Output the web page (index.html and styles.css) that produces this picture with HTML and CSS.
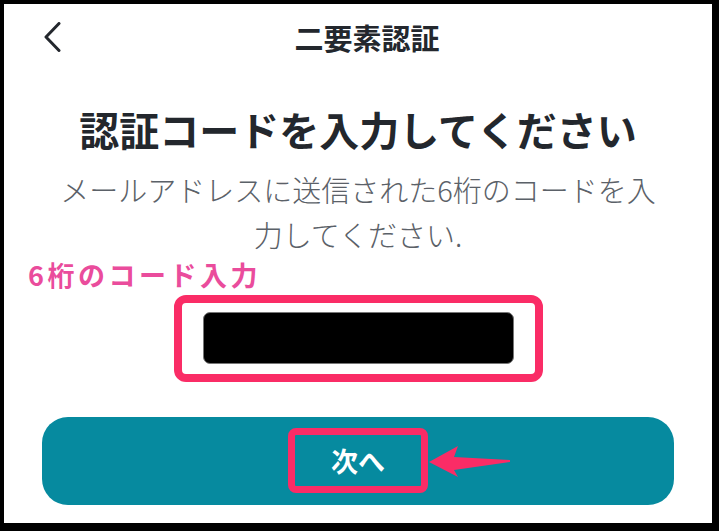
FILE: index.html
```html
<!DOCTYPE html>
<html lang="ja">
<head>
<meta charset="utf-8">
<link rel="stylesheet" href="styles.css">
</head>
<body>
<div class="screen">
  <header class="header">
    <svg class="back" width="20" height="30" viewBox="0 0 20 30"><polyline points="16,1.5 3,15 16,28.5" fill="none" stroke="#23272d" stroke-width="3" stroke-linecap="round" stroke-linejoin="round"/></svg>
    <h1 class="title">二要素認証</h1>
  </header>
  <h2 class="heading">認証コードを入力してください</h2>
  <p class="sub">メールアドレスに送信された6桁のコードを入力してください.</p>
  <div class="label">6桁のコード入力</div>
  <div class="frame"><div class="code"></div></div>
  <div class="btn">
    <span class="btn-frame">次へ</span>
    <svg class="arrow" width="84" height="36" viewBox="0 0 84 36"><polygon points="0,17 29,1 25,12 81,15 81,17 25,25 29,32" fill="#fa2c66"/></svg>
  </div>
</div>
</body>
</html>
```
FILE: styles.css
```css
* { box-sizing: border-box; margin: 0; padding: 0; }
html, body { background: #000; }
body {
  width: 719px;
  height: 531px;
  padding: 4px 7px 8px 4px;
  font-family: "Noto Sans CJK JP", "Noto Sans", sans-serif;
}
.screen {
  background: #fff;
  width: 708px;
  height: 519px;
  position: relative;
  display: flex;
  flex-direction: column;
  align-items: center;
}
.header {
  width: 100%;
  height: 66px;
  display: flex;
  align-items: center;
  position: relative;
}
.back {
  position: absolute;
  left: 39px;
  top: 18px;
}
.title {
  flex: 1;
  text-align: center;
  padding-left: 18px;
  font-size: 29px;
  font-weight: 700;
  color: #23272d;
  line-height: 40px;
}
.heading {
  margin-top: 31px;
  font-size: 40px;
  line-height: 56px;
  font-weight: 700;
  color: #23272d;
  white-space: nowrap;
}
.sub {
  margin-top: 10px;
  width: 610px;
  text-align: center;
  font-size: 29px;
  line-height: 45px;
  color: #5b6168;
  font-weight: 300;
}
.label {
  align-self: flex-start;
  margin-left: 24px;
  margin-top: 0;
  font-size: 27px;
  line-height: 36px;
  letter-spacing: 3.5px;
  font-weight: 700;
  color: #ea4c9c;
}
.frame {
  margin-top: 2px;
  width: 369px;
  height: 87px;
  border: 8px solid #fa2c66;
  border-radius: 12px;
  padding: 9px 21px 10px;
}
.code {
  width: 100%;
  height: 100%;
  background: #000;
  border: 1px solid #777;
  border-radius: 7px;
}
.btn {
  margin-top: 35px;
  width: 632px;
  height: 88px;
  background: #068a9f;
  border-radius: 26px;
  display: flex;
  align-items: center;
  justify-content: center;
  position: relative;
}
.btn-frame {
  width: 140px;
  height: 65px;
  border: 7px solid #fa2c66;
  border-radius: 8px;
  display: flex;
  align-items: center;
  justify-content: center;
  color: #fff;
  font-size: 27px;
  font-weight: 700;
  margin-top: -2px;
}
.arrow {
  position: absolute;
  left: 387px;
  top: 28px;
}
```
